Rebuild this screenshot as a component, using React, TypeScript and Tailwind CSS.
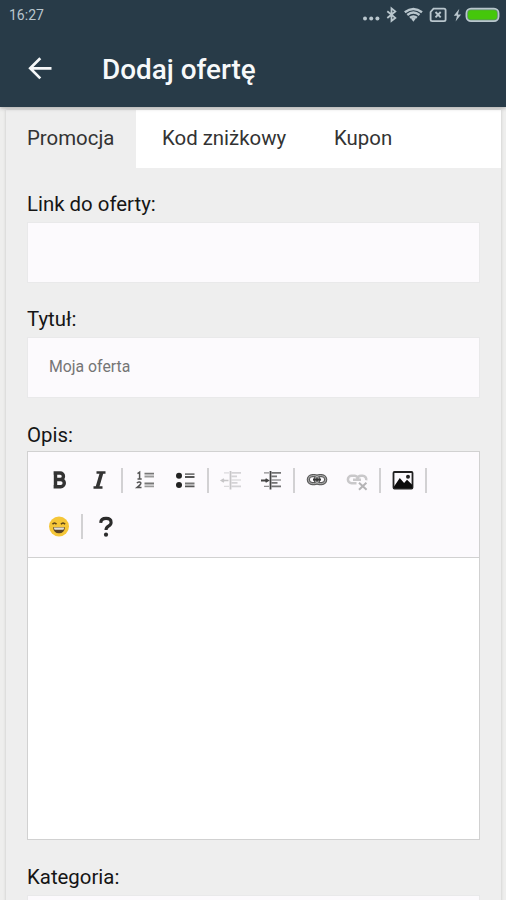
import React from 'react';

interface FieldProps {
    label: string;
    placeholder?: string;
    className?: string;
}

const Field: React.FC<FieldProps> = ({ label, placeholder, className = '' }) => (
    <div className={className}>
        <label className="block h-9 text-[20.4px] leading-9 text-[#151515]">{label}</label>
        <div className="h-[61px] border border-[#e9e9ea] bg-[#fcfafd] px-[21px] text-[15.8px] leading-[57px] text-[#757575]">
            {placeholder}
        </div>
    </div>
);

const Tool: React.FC<{ children: React.ReactNode }> = ({ children }) => (
    <div className="flex h-[46px] w-10 shrink-0 items-center justify-center">{children}</div>
);

const Separator = () => (
    <div className="flex h-[46px] w-[6px] shrink-0 items-center justify-center">
        <div className="h-[25px] w-[2px] bg-[#d2d1d3]" />
    </div>
);

const BoldIcon = () => (
    <svg width="24" height="24" viewBox="0 0 24 24" fill="none" stroke="#333" strokeWidth="3.4">
        <path d="M8.5 4.8V19.4M6.6 5h6.6a3.1 3.1 0 0 1 0 6.5H8.5M12.9 11.5h.8a3.6 3.6 0 0 1 0 7.2H6.6" />
    </svg>
);

const ItalicIcon = () => (
    <svg width="24" height="24" viewBox="0 0 24 24" fill="none" stroke="#333">
        <path d="M9.5 4.5h9M6.5 19.5h9" strokeWidth="2.4" />
        <path d="M14.7 4.5 10.3 19.5" strokeWidth="3.6" />
    </svg>
);

const NumberedListIcon = () => (
    <svg width="24" height="24" viewBox="0 0 24 24" fill="none">
        <path d="M4.5 5.6 6.6 4.2V11M4.5 11h4.2" stroke="#555" strokeWidth="1.5" />
        <path d="M4 15.2q.8-1.4 2.3-1.2 1.8.2 1.4 1.8-.4 1.3-3.5 3.7h4.3" stroke="#555" strokeWidth="1.6" />
        <path d="M11.5 5.7H21M11.5 15.5H21" stroke="#777" strokeWidth="1.8" />
        <path d="M11.5 8.5H21M11.5 18.3H21" stroke="#999" strokeWidth="1.8" />
    </svg>
);

const BulletListIcon = () => (
    <svg width="24" height="24" viewBox="0 0 24 24" fill="none">
        <circle cx="6" cy="7.8" r="3" fill="#222" />
        <circle cx="6" cy="17" r="3" fill="#222" />
        <path d="M12 6.2h9.5M12 15.5h9.5" stroke="#777" strokeWidth="1.8" />
        <path d="M12 9h9.5M12 18.3h9.5" stroke="#555" strokeWidth="1.8" />
    </svg>
);

const IndentIcon: React.FC<{ disabled?: boolean }> = ({ disabled }) => (
    <svg width="24" height="24" viewBox="0 0 24 24" fill="none" stroke={disabled ? '#c7c6c8' : '#444'}>
        <path d="M11.5 3v18.5" strokeWidth="1.8" />
        <path d="M5 4.8H10M5 18.4H10" strokeWidth="1.2" opacity="0.6" />
        <path d="M12.5 4.8H22M12.5 8.4h5.5M12.5 14.8h6M12.5 18.4h9.5" strokeWidth="1.7" opacity="0.75" />
        <path d="M12.5 12h9.5" strokeWidth="1.4" opacity="0.6" />
        {disabled ? (
            <path d="M2.5 12.5h7M5 11 2.5 12.5 5 14" strokeWidth="1.6" />
        ) : (
            <path d="M2 12.5h7M6.5 11l2.5 1.5L6.5 14" strokeWidth="1.8" />
        )}
    </svg>
);

const LinkIcon = () => (
    <svg width="24" height="24" viewBox="0 0 24 24" fill="none">
        <rect x="3.3" y="7.6" width="10.5" height="8" rx="4" stroke="#5a5a5a" strokeWidth="3.2" />
        <rect x="10.2" y="7.6" width="10.5" height="8" rx="4" stroke="#5a5a5a" strokeWidth="3.2" />
        <rect x="3.3" y="7.6" width="10.5" height="8" rx="4" stroke="#bbb" strokeWidth="0.9" />
        <rect x="10.2" y="7.6" width="10.5" height="8" rx="4" stroke="#bbb" strokeWidth="0.9" />
        <path d="M8 11.6h8" stroke="#333" strokeWidth="2" />
    </svg>
);

const UnlinkIcon = () => (
    <svg width="24" height="24" viewBox="0 0 24 24" fill="none">
        <path
            d="M11.5 15.2H6.6a3.7 3.7 0 0 1 0-7.4h3.2q2.7.3 3.4 3M12 11.5q.7-3.7 4-3.7h1.6a3.6 3.6 0 0 1 3.6 4.4M8 11.7h8"
            stroke="#c9c8ca"
            strokeWidth="2.5"
        />
        <path d="m14 14.7 7.6 7M21.4 14.7l-7.4 7" stroke="#b5b4b6" strokeWidth="2" />
    </svg>
);

const ImageIcon = () => (
    <svg width="24" height="24" viewBox="0 0 24 24" fill="none">
        <rect x="2.5" y="4" width="19" height="16.5" rx="1" stroke="#222" strokeWidth="1.8" />
        <path d="M3 18.5 8.8 10l4.3 5 2.9-3.2 5.2 5V20H3z" fill="#0c0c0c" />
        <circle cx="17" cy="8.7" r="2" fill="#222" />
    </svg>
);

const SmileyIcon = () => (
    <svg width="22" height="22" viewBox="0 0 22 22" fill="none">
        <circle cx="11" cy="11.5" r="10" fill="#f5c638" />
        <path d="M4.5 9.2q2-2.4 4 0M13 9.2q2-2.4 4 0" stroke="#5b4317" strokeWidth="1.7" />
        <path d="M5 12.3h12q-.7 6-6 6t-6-6z" fill="#594325" />
        <path d="M5.8 12.6h10.4q-.4 2.2-1 2.2H6.8q-.6 0-1-2.2z" fill="#e3dfd5" />
    </svg>
);

const HelpIcon = () => (
    <svg width="24" height="24" viewBox="0 0 24 24" fill="none">
        <path d="M7.7 8.9Q7.9 4.4 13.1 4.4q5 0 5 4 0 2.2-2.6 3.7-2.5 1.5-2.5 4" stroke="#2b2b2b" strokeWidth="3.1" />
        <circle cx="13" cy="20.7" r="2.1" fill="#2b2b2b" />
    </svg>
);

const StatusBar = () => (
    <div className="flex h-[30px] items-center justify-between pl-[9px] pr-[6px] text-[#b9c6cd]">
        <span className="text-[14px] leading-[30px]">16:27</span>
        <svg width="138" height="20" viewBox="0 0 138 20" fill="none" stroke="currentColor">
            <g fill="currentColor" stroke="none">
                <circle cx="3" cy="13.6" r="2" />
                <circle cx="9.2" cy="13.6" r="2" />
                <circle cx="15.4" cy="13.6" r="2" />
            </g>
            <path d="m25.3 6.3 8 6.6-3.8 3V3.4l3.8 3-8 6.6" strokeWidth="1.8" />
            <path d="M42.8 7.2q8.6-6.6 17.2 0M45.3 10q6.1-4.8 12.2 0M47.9 12.8q3.5-2.8 7 0" strokeWidth="2.4" />
            <path d="m48.9 13.5 2.5 3.2 2.5-3.2q-2.5-1.6-5 0z" fill="currentColor" stroke="none" />
            <path d="M71.5 3.6H82q1.6 0 1.6 1.6v9.4q0 1.6-1.6 1.6H70.2q-1.6 0-1.6-1.6V7z" strokeWidth="1.8" />
            <path d="m73.5 7 5.2 5.4M78.7 7l-5.2 5.4" strokeWidth="1.9" />
            <path d="m97.3 3.8-5.5 7h3.2L93.6 16.5l5.5-6.9h-3.2z" fill="currentColor" stroke="none" />
            <rect x="104.4" y="3.6" width="32.2" height="12.6" rx="4.6" fill="#5c8d6a" strokeWidth="1.7" />
            <rect x="106" y="5.2" width="29" height="9.4" rx="3" fill="#45c70b" stroke="none" />
        </svg>
    </div>
);

const Editor = () => (
    <div className="mt-[19px]">
        <label className="block h-[34px] text-[20.4px] leading-[36px] text-[#151515]">Opis:</label>
        <div className="h-[389px] border border-[#d1d1d1] bg-white">
            <div className="flex h-[106px] flex-col border-b border-[#d1d1d1] bg-[#fcfafd] pl-[11px] pt-[5px]">
                <div className="flex">
                    <Tool><BoldIcon /></Tool>
                    <Tool><ItalicIcon /></Tool>
                    <Separator />
                    <Tool><NumberedListIcon /></Tool>
                    <Tool><BulletListIcon /></Tool>
                    <Separator />
                    <Tool><IndentIcon disabled /></Tool>
                    <Tool><IndentIcon /></Tool>
                    <Separator />
                    <Tool><LinkIcon /></Tool>
                    <Tool><UnlinkIcon /></Tool>
                    <Separator />
                    <Tool><ImageIcon /></Tool>
                    <Separator />
                </div>
                <div className="flex">
                    <Tool><SmileyIcon /></Tool>
                    <Separator />
                    <Tool><HelpIcon /></Tool>
                </div>
            </div>
        </div>
    </div>
);

const App: React.FC = () => {
    return (
        <div className="flex h-[900px] w-[506px] flex-col overflow-hidden bg-[#eeeeed] font-['Roboto','Liberation_Sans',sans-serif]">
            <header className="z-10 h-[107px] shrink-0 bg-[#283b48] shadow-[0_1px_4px_rgba(0,0,0,0.3)]">
                <StatusBar />
                <div className="flex h-[77px] items-center pl-[27px]">
                    <svg width="26" height="26" viewBox="0 0 26 26" fill="none" stroke="#f5f7f8" strokeWidth="2.7">
                        <path d="M24.5 12.3H3.5M13.3 2.2 3.2 12.3l10.1 10.1" />
                    </svg>
                    <h1 className="ml-[49px] pt-[3px] text-[27.9px] font-medium leading-none text-[#f7f9fa]">Dodaj ofertę</h1>
                </div>
            </header>
            <main className="ml-[6px] mt-[3px] w-[495px] grow bg-[#eeeeee] shadow-[0_0_3px_rgba(0,0,0,0.18)]">
                <nav className="flex h-[58px] bg-white text-[20.4px] leading-[57px] text-[#333]">
                    <div className="w-[130px] bg-[#eeeeee] pl-[21px]">Promocja</div>
                    <div className="w-[172px] pl-[26px]">Kod zniżkowy</div>
                    <div className="pl-[26px]">Kupon</div>
                </nav>
                <div className="pl-[21px] pr-[21px] pt-[18px]">
                    <Field label="Link do oferty:" />
                    <Field label="Tytuł:" placeholder="Moja oferta" className="mt-[18px]" />
                    <Editor />
                    <Field label="Kategoria:" className="mt-[19px]" />
                </div>
            </main>
        </div>
    );
};

export default App;
